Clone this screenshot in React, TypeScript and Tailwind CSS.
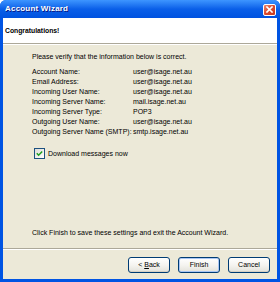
import React from "react";

const rows: [string, string][] = [
  ["Account Name:", "user@isage.net.au"],
  ["Email Address:", "user@isage.net.au"],
  ["Incoming User Name:", "user@isage.net.au"],
  ["Incoming Server Name:", "mail.isage.net.au"],
  ["Incoming Server Type:", "POP3"],
  ["Outgoing User Name:", "user@isage.net.au"],
  ["Outgoing Server Name (SMTP):", "smtp.isage.net.au"],
];

function XPButton({ children, def }: { children: React.ReactNode; def?: boolean }) {
  return (
    <div
      className={`w-[42px] h-[16px] rounded-[3px] border border-[#003C74] flex items-center justify-center text-[7px] text-black bg-gradient-to-b from-[#FFFFFF] via-[#F5F4F0] to-[#E3E2DA] ${
        def ? "shadow-[inset_0_0_0_1px_#A9C6F4]" : "shadow-[inset_0_-1px_0_#D6D0C5]"
      }`}
    >
      {children}
    </div>
  );
}

export default function App() {
  return (
    <div
      className="w-[280px] h-[282px] flex flex-col bg-[#0054E3] overflow-hidden rounded-t-[6px]"
      style={{ fontFamily: '"Liberation Sans", Arial, sans-serif' }}
    >
      <div className="h-[18px] flex items-center justify-between pl-[5px] pr-[4px] bg-gradient-to-b from-[#3D95FF] via-[#0A5FE8] to-[#0052E0]">
        <span className="text-white font-bold text-[8px] leading-none tracking-[0.2px] [text-shadow:1px_1px_0_#0A1883]">
          Account Wizard
        </span>
        <div className="w-[13px] h-[12px] mt-[1px] rounded-[2px] border border-white bg-gradient-to-br from-[#E9856D] via-[#DB4A2D] to-[#C43A1E] flex items-center justify-center">
          <svg width="7" height="7" viewBox="0 0 7 7">
            <path d="M1 1 L6 6 M6 1 L1 6" stroke="white" strokeWidth="1.6" strokeLinecap="square" />
          </svg>
        </div>
      </div>
      <div className="flex-1 flex flex-col mx-[3px] mb-[3px] bg-[#ECE9D8]">
        <div className="h-[25px] bg-white flex items-center pl-[2px] pt-[1px]">
          <span className="font-bold text-[6.8px] text-black">Congratulations!</span>
        </div>
        <div className="h-px bg-[#ACA899]" />
        <div className="h-px bg-white" />
        <div className="flex-1 flex flex-col pl-[29px] pt-[7px] text-[7px] leading-[10px] text-black">
          <div>Please verify that the information below is correct.</div>
          <div className="mt-[5px] flex flex-col">
            {rows.map(([l, v]) => (
              <div key={l} className="flex h-[10px]">
                <span className="w-[101px] shrink-0">{l}</span>
                <span>{v}</span>
              </div>
            ))}
          </div>
          <div className="mt-[11px] flex items-center gap-[3px] pl-[2px]">
            <div className="w-[11px] h-[11px] border border-[#1C5180] bg-gradient-to-br from-[#DCDCD7] to-white flex items-center justify-center">
              <svg width="7" height="7" viewBox="0 0 7 7">
                <path d="M0.8 3.2 L2.6 5.2 L6.2 1.4" stroke="#21A121" strokeWidth="1.5" fill="none" />
              </svg>
            </div>
            <span>Download messages now</span>
          </div>
          <div className="mt-auto mb-[10px]">Click Finish to save these settings and exit the Account Wizard.</div>
        </div>
        <div className="h-px bg-[#ACA899]" />
        <div className="h-px bg-white" />
        <div className="flex justify-end gap-[8px] pt-[7px] pb-[6px] pr-[7px]">
          <XPButton>
            &lt; <span className="underline ml-[2px]">B</span>ack
          </XPButton>
          <XPButton def>Finish</XPButton>
          <XPButton>Cancel</XPButton>
        </div>
      </div>
    </div>
  );
}
